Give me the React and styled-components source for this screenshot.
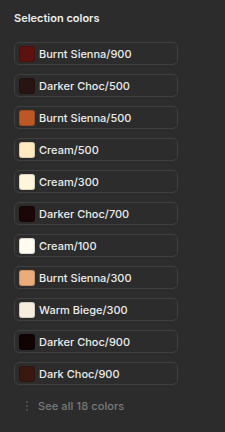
import React from "react";
import styled, { createGlobalStyle } from "styled-components";

const GlobalStyle = createGlobalStyle`
  html, body {
    margin: 0;
    padding: 0;
    background: #2c2c2c;
  }
  body {
    font-family: Inter, "Noto Sans", sans-serif;
    -webkit-font-smoothing: antialiased;
  }
`;

const Panel = styled.div`
  width: 225px;
  height: 432px;
  box-sizing: border-box;
  padding: 11px 14px 0 14px;
  background: #2c2c2c;
`;

const Title = styled.div`
  font-size: 11px;
  font-weight: 600;
  color: #eeeeee;
  line-height: 14px;
  margin-bottom: 17px;
`;

const List = styled.div`
  display: flex;
  flex-direction: column;
  gap: 9px;
`;

const Row = styled.div`
  width: 164px;
  height: 23px;
  box-sizing: border-box;
  border: 1px solid #3f3f3f;
  border-radius: 5px;
  display: flex;
  align-items: center;
  padding-left: 4px;
  gap: 4px;
`;

const Swatch = styled.div`
  width: 16px;
  height: 16px;
  border-radius: 3px;
  background: ${(p) => p.$color};
  box-shadow: inset 0 0 0 1px rgba(0, 0, 0, 0.15);
`;

const Label = styled.span`
  font-size: 11px;
  font-weight: 500;
  color: #ececec;
  line-height: 14px;
  white-space: nowrap;
`;

const SeeAll = styled.div`
  display: flex;
  align-items: center;
  gap: 9px;
  margin-top: 14px;
  padding-left: 11px;
  font-size: 11px;
  font-weight: 500;
  letter-spacing: 0.1px;
  color: #7a7a7a;
  line-height: 14px;
`;

const colors = [
  { name: "Burnt Sienna/900", hex: "#5c120e" },
  { name: "Darker Choc/500", hex: "#281410" },
  { name: "Burnt Sienna/500", hex: "#bd5826" },
  { name: "Cream/500", hex: "#ffeac2" },
  { name: "Cream/300", hex: "#fff5db" },
  { name: "Darker Choc/700", hex: "#1b0705" },
  { name: "Cream/100", hex: "#fffbf1" },
  { name: "Burnt Sienna/300", hex: "#e9ac7a" },
  { name: "Warm Biege/300", hex: "#f7eddf" },
  { name: "Darker Choc/900", hex: "#110303" },
  { name: "Dark Choc/900", hex: "#3a1710" },
];

const DotsIcon = () => (
  <svg width="4" height="12" viewBox="0 0 4 12">
    <circle cx="2" cy="2" r="1" fill="#555555" />
    <circle cx="2" cy="6" r="1" fill="#555555" />
    <circle cx="2" cy="10" r="1" fill="#555555" />
  </svg>
);

export default function App() {
  return (
    <>
      <GlobalStyle />
      <Panel>
        <Title>Selection colors</Title>
        <List>
          {colors.map((c) => (
            <Row key={c.name}>
              <Swatch $color={c.hex} />
              <Label>{c.name}</Label>
            </Row>
          ))}
        </List>
        <SeeAll>
          <DotsIcon />
          See all 18 colors
        </SeeAll>
      </Panel>
    </>
  );
}
